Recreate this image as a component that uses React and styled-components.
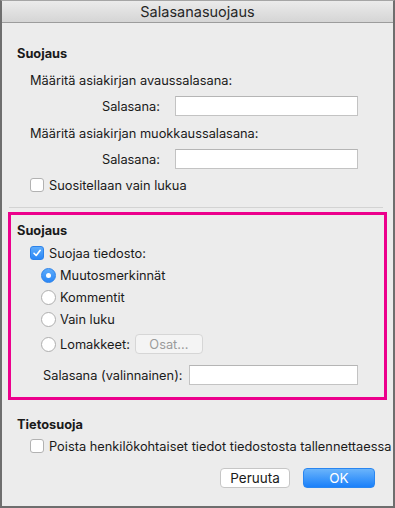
import React from "react";
import styled, { createGlobalStyle } from "styled-components";

const GlobalStyle = createGlobalStyle`
  html, body { margin: 0; padding: 0; background: #ececec; }
  body {
    font-family: Inter, "Liberation Sans", Arial, sans-serif;
    font-size: 12.8px;
    color: #1a1a1a;
  }
  * { box-sizing: border-box; }
`;

const Dialog = styled.div`
  width: 395px;
  height: 508px;
  border: 2px solid #6e6e6e;
  border-top: 1px solid #a5a5a5;
  background: #ececec;
  display: flex;
  flex-direction: column;
`;

const TitleBar = styled.div`
  height: 22px;
  border-bottom: 1px solid #9c9c9c;
  background: linear-gradient(#ebebeb, #d5d5d5);
  display: flex;
  align-items: center;
  justify-content: center;
  font-size: 14.5px;
  color: #262626;
`;

const Body = styled.div`
  padding: 0 6px;
  display: flex;
  flex-direction: column;
`;

const Section = styled.section`
  padding-left: 9px;
`;

const PinkBox = styled.section`
  margin-top: 4px;
  border: 3px solid #ec008c;
  padding: 0 0 12px 6px;
`;

const Row = styled.div`
  display: flex;
  align-items: center;
  height: ${(p) => p.$h || 18}px;
  margin-top: ${(p) => p.$mt || 0}px;
  padding-left: ${(p) => p.$indent || 0}px;
  white-space: nowrap;
`;

const Heading = styled(Row)`
  font-weight: 700;
`;

const Separator = styled.div`
  height: 1px;
  background: #d3d3d3;
  margin: 13px 4px 0 1px;
`;

const FieldLabel = styled.span`
  width: ${(p) => p.$w}px;
  text-align: ${(p) => p.$align || "left"};
  flex: none;
`;

const TextInput = styled.div`
  width: ${(p) => p.$w}px;
  height: 20px;
  margin-left: ${(p) => p.$ml || 0}px;
  background: #fff;
  border: 1px solid #c3c3c3;
  border-top-color: #b5b5b5;
`;

const Box = styled.span`
  width: 14px;
  height: 14px;
  border-radius: 3px;
  margin-right: 5px;
  flex: none;
  display: inline-flex;
  align-items: center;
  justify-content: center;
  background: ${(p) => (p.$checked ? "linear-gradient(#5eacfb, #2a87f6)" : "#fff")};
  border: 1px solid ${(p) => (p.$checked ? "#2c82ea" : "#b2b2b2")};
`;

const Radio = styled.span`
  width: 15px;
  height: 15px;
  border-radius: 50%;
  margin-right: 4px;
  flex: none;
  display: inline-flex;
  align-items: center;
  justify-content: center;
  background: ${(p) => (p.$checked ? "linear-gradient(#5eacfb, #2a87f6)" : "#fff")};
  border: 1px solid ${(p) => (p.$checked ? "#2c82ea" : "#aeaeae")};
  &::after {
    content: "";
    display: ${(p) => (p.$checked ? "block" : "none")};
    width: 5px;
    height: 5px;
    border-radius: 50%;
    background: #fff;
  }
`;

const SmallButton = styled.span`
  width: 68px;
  height: 20px;
  margin-left: 5px;
  border-radius: 4px;
  border: 1px solid #d6d6d6;
  background: #f4f4f4;
  color: #9b9b9b;
  display: inline-flex;
  align-items: center;
  justify-content: center;
`;

const ButtonRow = styled.div`
  display: flex;
  justify-content: flex-end;
  gap: 13px;
  margin-top: 13px;
  padding-right: 12px;
`;

const Button = styled.span`
  width: ${(p) => p.$w}px;
  height: 20px;
  border-radius: 4px;
  display: inline-flex;
  align-items: center;
  justify-content: center;
  font-size: 13.5px;
  color: ${(p) => (p.$primary ? "#fff" : "#1a1a1a")};
  background: ${(p) => (p.$primary ? "linear-gradient(#6ab4fb, #1a80fa)" : "#fff")};
  border: 1px solid ${(p) => (p.$primary ? "#2a86f0" : "#c6c6c6")};
`;

const Check = () => (
  <svg width="10" height="10" viewBox="0 0 10 10">
    <path d="M2 5.3 L4.2 7.5 L8.2 2.3" fill="none" stroke="#fff" strokeWidth="1.6" strokeLinecap="round" strokeLinejoin="round" />
  </svg>
);

const CheckRow = ({ checked, children, mt }) => (
  <Row $mt={mt} $indent={13}>
    <Box $checked={checked}>{checked && <Check />}</Box>
    {children}
  </Row>
);

const RadioRow = ({ checked, children, mt, h }) => (
  <Row $mt={mt} $h={h} $indent={24}>
    <Radio $checked={checked} />
    {children}
  </Row>
);

export default function App() {
  return (
    <>
      <GlobalStyle />
      <Dialog>
        <TitleBar>Salasanasuojaus</TitleBar>
        <Body>
          <Section>
            <Heading $mt={21}>Suojaus</Heading>
            <Row $mt={9} $indent={13}>Määritä asiakirjan avaussalasana:</Row>
            <Row $mt={7} $h={20}>
              <FieldLabel $w={143} $align="right">Salasana:</FieldLabel>
              <TextInput $w={183} $ml={15} />
            </Row>
            <Row $mt={8} $indent={13}>Määritä asiakirjan muokkaussalasana:</Row>
            <Row $mt={7} $h={20}>
              <FieldLabel $w={143} $align="right">Salasana:</FieldLabel>
              <TextInput $w={183} $ml={15} />
            </Row>
            <CheckRow mt={7}>Suositellaan vain lukua</CheckRow>
          </Section>
          <Separator />
          <PinkBox>
            <Heading $mt={6}>Suojaus</Heading>
            <CheckRow mt={5} checked>Suojaa tiedosto:</CheckRow>
            <RadioRow mt={4} checked>Muutosmerkinnät</RadioRow>
            <RadioRow mt={4}>Kommentit</RadioRow>
            <RadioRow mt={4}>Vain luku</RadioRow>
            <RadioRow mt={6} h={20}>
              Lomakkeet:
              <SmallButton>Osat...</SmallButton>
            </RadioRow>
            <Row $mt={11} $h={20} $indent={26}>
              <FieldLabel $w={146}>Salasana (valinnainen):</FieldLabel>
              <TextInput $w={169} />
            </Row>
          </PinkBox>
          <Section>
            <Heading $mt={15}>Tietosuoja</Heading>
            <CheckRow mt={4}>Poista henkilökohtaiset tiedot tiedostosta tallennettaessa</CheckRow>
          </Section>
          <ButtonRow>
            <Button $w={70}>Peruuta</Button>
            <Button $w={72} $primary>OK</Button>
          </ButtonRow>
        </Body>
      </Dialog>
    </>
  );
}
